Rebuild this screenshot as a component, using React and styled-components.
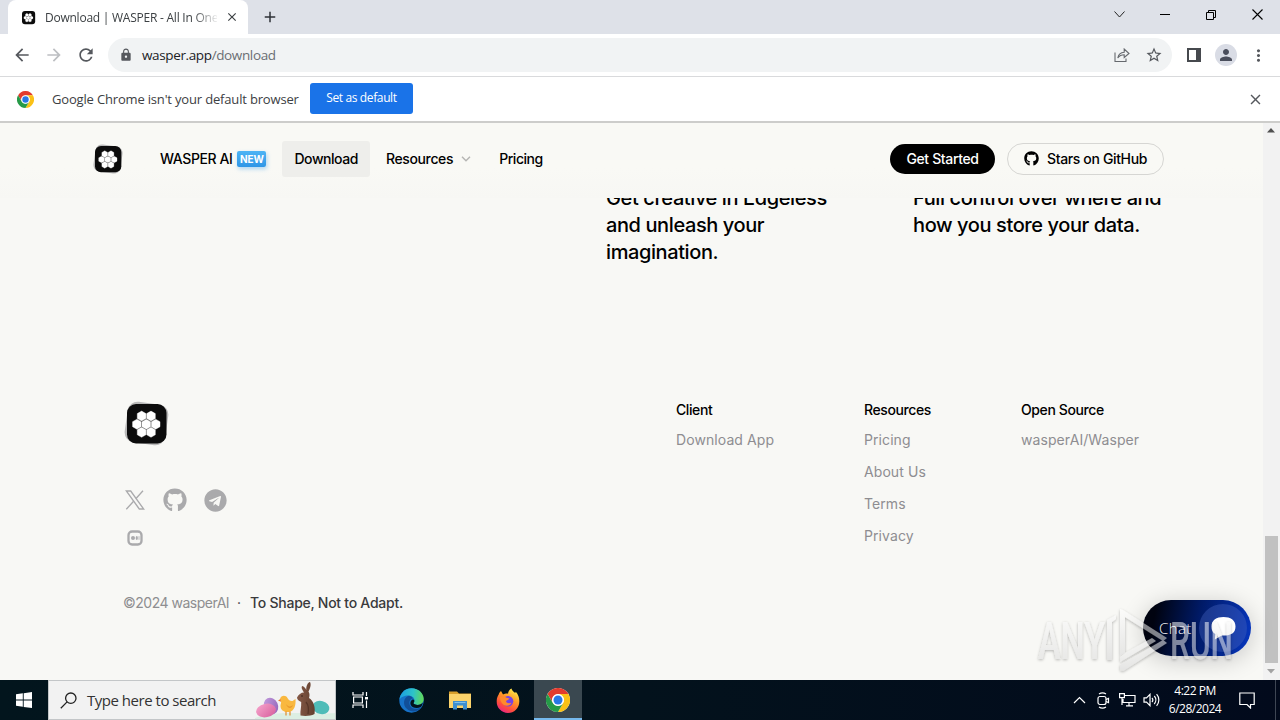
import React from "react";
import styled, { createGlobalStyle, css } from "styled-components";
import {
  MdArrowBack,
  MdArrowForward,
  MdRefresh,
  MdLock,
  MdStarBorder,
  MdPerson,
  MdMoreVert,
  MdClose,
  MdAdd,
} from "react-icons/md";
import { FaGithub, FaTelegram } from "react-icons/fa";

const GlobalStyle = createGlobalStyle`
  * {
    box-sizing: border-box;
  }

  body {
    margin: 0;
    overflow: hidden;
    font-family: "Open Sans", "Noto Sans", sans-serif;
  }

  svg {
    display: block;
    flex: none;
  }
`;

const Screen = styled.div`
  width: 1280px;
  height: 720px;
  display: flex;
  flex-direction: column;
  overflow: hidden;
  background: #f8f8f5;
`;

/* ---------- browser chrome ---------- */

const TabStrip = styled.div`
  height: 34px;
  flex: none;
  display: flex;
  background: #dee1e8;
  padding-left: 8px;
`;

const Tab = styled.div`
  width: 240px;
  height: 34px;
  display: flex;
  align-items: center;
  padding: 0 9px 0 13px;
  background: #fff;
  border-radius: 8px 8px 0 0;
  color: #3c4043;
`;

const TabTitle = styled.div`
  width: 174px;
  margin: 0 8px 0 9px;
  font-size: 12px;
  letter-spacing: -0.24px;
  white-space: nowrap;
  overflow: hidden;
  mask-image: linear-gradient(to right, #000 148px, transparent 174px);
`;

const NewTab = styled.div`
  width: 44px;
  display: flex;
  align-items: center;
  justify-content: center;
  color: #2f3237;
`;

const WindowButtons = styled.div`
  margin-left: auto;
  display: flex;
  align-items: center;
  height: 29px;
`;

const WindowButton = styled.div`
  width: 46px;
  display: flex;
  justify-content: center;
`;

const Toolbar = styled.div`
  height: 43px;
  flex: none;
  display: flex;
  align-items: center;
  background: #fff;
  border-bottom: 1px solid #d9dadc;
  padding: 0 6px;
  color: #55585d;
`;

const ToolButton = styled.div`
  width: 32px;
  height: 32px;
  display: flex;
  align-items: center;
  justify-content: center;
  color: ${(props) => (props.$off ? "#bdbfc2" : "#55585d")};
`;

const Omnibox = styled.div`
  width: 1064px;
  height: 34px;
  margin: 0 6px;
  display: flex;
  align-items: center;
  border-radius: 17px;
  background: #f1f3f4;
  padding: 0 2px 0 11px;
`;

const Url = styled.div`
  margin: 0 auto 0 9px;
  font-size: 13.5px;
  letter-spacing: -0.37px;
  color: #6a6e73;

  b {
    font-weight: 400;
    color: #202124;
  }
`;

const Avatar = styled.div`
  width: 22px;
  height: 22px;
  border-radius: 50%;
  display: flex;
  align-items: center;
  justify-content: center;
  background: #d9dce5;
  color: #4a4e5c;
`;

const InfoBar = styled.div`
  height: 46px;
  flex: none;
  display: flex;
  align-items: center;
  background: #fff;
  border-bottom: 2px solid #cdcdcb;
  padding: 0 16px 0 17px;
  color: #55585d;
`;

const InfoText = styled.div`
  width: 246px;
  margin: 0 12px 0 18px;
  font-size: 13px;
  letter-spacing: -0.17px;
  white-space: nowrap;
  color: #3c4043;
`;

const DefaultButton = styled.div`
  width: 103px;
  height: 31px;
  line-height: 30px;
  margin: 0 auto 2px 0;
  border-radius: 3px;
  background: #1a73e8;
  color: #fff;
  font-size: 12px;
  letter-spacing: -0.38px;
  text-align: center;
`;

/* ---------- web page ---------- */

const Viewport = styled.div`
  height: 557px;
  flex: none;
  display: flex;
  position: relative;
`;

const Page = styled.div`
  width: 1263px;
  display: flex;
  flex-direction: column;
  font-family: Inter, sans-serif;
  color: #000;
  background: #f8f8f5;
`;

const Nav = styled.div`
  height: 75px;
  flex: none;
  display: flex;
  align-items: center;
  padding: 0 99px 3px 93px;
  background: linear-gradient(#f9f9f5 60%, #f7f7f4);
`;

const NavItem = styled.div`
  height: 36px;
  display: flex;
  align-items: center;
  border-radius: 3px;
  padding: 0 12px 1px;
  font-size: 14px;
  font-weight: 450;
  letter-spacing: ${(props) => props.$spacing || "-0.45px"};
  white-space: nowrap;
  ${(props) =>
    props.$active &&
    css`
      background: #eeeeeb;
    `}

  > svg {
    margin-left: 8px;
  }
`;

const NavLinks = styled.div`
  display: flex;
  gap: 4px;
  margin-left: 25px;
`;

const NewBadge = styled.span`
  width: 29px;
  height: 16px;
  line-height: 16px;
  margin: 1px 0 0 5px;
  border-radius: 2px;
  background: linear-gradient(#4db4f5, #2f96e6);
  box-shadow: 1px 2px 4px rgba(60, 160, 235, 0.4);
  color: #fff;
  font-size: 10px;
  font-weight: 700;
  letter-spacing: 0;
  text-align: center;
`;

const Pill = styled.div`
  width: ${(props) => (props.$outline ? 157 : 105)}px;
  height: ${(props) => (props.$outline ? 32 : 30)}px;
  margin-left: ${(props) => (props.$outline ? "12px" : "auto")};
  padding-bottom: 1px;
  display: flex;
  align-items: center;
  justify-content: center;
  gap: 8px;
  border-radius: 16px;
  border: ${(props) => (props.$outline ? "1px solid #d6d6d3" : "none")};
  background: ${(props) => (props.$outline ? "transparent" : "#000")};
  color: ${(props) => (props.$outline ? "#000" : "#fff")};
  font-size: 14px;
  font-weight: 450;
  letter-spacing: -0.36px;
  white-space: nowrap;
`;

const Features = styled.div`
  height: 180px;
  flex: none;
  display: grid;
  grid-template-columns: 307px 307px;
  padding-left: 606px;
  overflow: hidden;
`;

const FeatureText = styled.p`
  margin: -13px 0 0;
  font-size: 20px;
  line-height: 27px;
  font-weight: 500;
  letter-spacing: -0.4px;
  white-space: pre-line;
`;

const Footer = styled.div`
  flex: 1;
  display: flex;
  padding: 23px 0 0 124px;
`;

const Brand = styled.div`
  width: 552px;
`;

const Socials = styled.div`
  width: 120px;
  margin-top: 35px;
  display: grid;
  grid-template-columns: repeat(3, 40px);
  grid-auto-rows: 38px;
  align-items: center;
  color: #aaaaac;
`;

const SocialLink = styled.div`
  width: 24px;
  height: 24px;
  margin-left: -1px;
  display: flex;
  align-items: center;
  justify-content: center;
`;

const Legal = styled.div`
  margin: 36px 0 0 -1px;
  display: flex;
  font-size: 14px;
  line-height: 20px;
  color: #3a3a3c;
  white-space: nowrap;
`;

const Owner = styled.span`
  width: 114px;
  letter-spacing: -0.5px;
  color: #8e8e90;
`;

const Motto = styled.span`
  font-weight: 450;
  margin-left: 9px;
  letter-spacing: -0.26px;
`;

const LinkColumn = styled.div`
  width: ${(props) => props.$width}px;
  display: flex;
  flex-direction: column;
  font-size: 14px;
`;

const ColumnTitle = styled.div`
  line-height: 20px;
  margin: -1px 0 4px;
  font-weight: 450;
  letter-spacing: -0.4px;
`;

const ColumnLink = styled.div`
  line-height: 32px;
  letter-spacing: 0.08px;
  color: #8e8d91;
`;

const ScrollBar = styled.div`
  width: 17px;
  display: flex;
  flex-direction: column;
  align-items: center;
  justify-content: space-between;
  padding: 5px 1px 6px 0;
  background: #f2f2f2;
`;

const ScrollThumb = styled.div`
  width: 13px;
  height: 127px;
  margin: auto 0 6px;
  background: #c1c1c1;
`;

const ChatButton = styled.div`
  position: absolute;
  left: 1143px;
  top: 477px;
  width: 108px;
  height: 56px;
  display: flex;
  align-items: center;
  justify-content: space-between;
  padding: 0 4px 0 16px;
  border-radius: 28px;
  background: linear-gradient(100deg, #000310 12%, #001a66 50%, #0634b8 95%);
  box-shadow: 0 4px 24px rgba(2, 6, 16, 0.2);
  color: #fff;
  font-size: 15px;
  font-weight: 300;
  letter-spacing: 0.4px;
`;

const ChatBubble = styled.div`
  width: 48px;
  height: 48px;
  border-radius: 50%;
  display: flex;
  align-items: center;
  justify-content: center;
  background: rgba(70, 100, 190, 0.4);
`;

const Watermark = styled.svg`
  position: absolute;
  left: 1030px;
  top: 480px;
`;

/* ---------- windows taskbar ---------- */

const TaskBar = styled.div`
  height: 40px;
  flex: none;
  display: flex;
  align-items: center;
  background: linear-gradient(90deg, #02151d, #03121c 50%, #020a1c);
  color: #fff;
`;

const TaskButton = styled.div`
  width: ${(props) => props.$width || 48}px;
  height: 40px;
  display: flex;
  align-items: center;
  justify-content: center;
  ${(props) =>
    props.$active &&
    css`
      background: #3a4850;
      border-bottom: 2px solid #76b9ed;
      padding-top: 1px;
    `}
`;

const SearchBox = styled.div`
  width: 288px;
  height: 40px;
  display: flex;
  align-items: center;
  padding-left: 11px;
  background: #f2f2f2;
  border: 1px solid #c3c6c8;
  color: #333;
  font-size: 15px;
  letter-spacing: -0.48px;

  span {
    width: 171px;
    margin-left: 10px;
    white-space: nowrap;
  }
`;

const Tray = styled.div`
  margin-left: auto;
  display: flex;
  align-items: center;
`;

const TrayIcon = styled.div`
  width: 24px;
  display: flex;
  justify-content: center;
`;

const Clock = styled.div`
  width: 64px;
  font-size: 12px;
  line-height: 18px;
  letter-spacing: -0.5px;
  text-align: center;
  white-space: nowrap;
`;

const Notifications = styled.div`
  width: 40px;
  height: 40px;
  display: flex;
  align-items: center;
  justify-content: center;
  margin-right: 8px;
`;

const ShowDesktop = styled.div`
  width: 5px;
  height: 40px;
  border-left: 1px solid #3e4654;
`;

/* ---------- drawings ---------- */

const HEX_CENTERS = [
  [17.6, 15.4],
  [27, 15.4],
  [12.9, 23.5],
  [22.3, 23.5],
  [31.7, 23.5],
  [17.6, 31.6],
  [27, 31.6],
];

const hexPoints = (cx, cy, r) =>
  [30, 90, 150, 210, 270, 330]
    .map((deg) => {
      const a = (deg * Math.PI) / 180;
      return `${(cx + r * Math.cos(a)).toFixed(2)},${(cy + r * Math.sin(a)).toFixed(2)}`;
    })
    .join(" ");

const WasperLogo = ({ size, plain }) => (
  <svg width={size} height={size} viewBox="0 0 45 45">
    {!plain && (
      <rect x="2" y="2" width="41" height="41" rx="10" fill="#b9b9b9" transform="rotate(8 22.5 22.5)" />
    )}
    <rect x="3" y="3" width="39.5" height="39.5" rx="9" fill="#0c0c0c" />
    {HEX_CENTERS.map(([x, y]) => (
      <polygon
        key={`${x}-${y}`}
        points={hexPoints(x, y - 0.3, 5)}
        fill="#fff"
        stroke="#fff"
        strokeWidth="0.4"
        strokeLinejoin="round"
      />
    ))}
  </svg>
);

const ChromeLogo = ({ size }) => (
  <svg width={size} height={size} viewBox="0 0 48 48">
    <circle cx="24" cy="24" r="24" fill="#fff" />
    <path d="M3.2 12A24 24 0 0 1 44.8 12H24A12 12 0 0 0 13.6 30Z" fill="#e33b2e" />
    <path d="M44.8 12A24 24 0 0 1 24 48L34.4 30A12 12 0 0 0 24 12Z" fill="#fbc116" />
    <path d="M24 48A24 24 0 0 1 3.2 12L13.6 30A12 12 0 0 0 34.4 30Z" fill="#269a48" />
    <circle cx="24" cy="24" r="11.5" fill="#fff" />
    <circle cx="24" cy="24" r="9" fill="#2878e6" />
  </svg>
);

const EdgeLogo = () => (
  <svg width="25" height="25" viewBox="0 0 24 24">
    <defs>
      <linearGradient id="edgeTop" x1="0" y1="0.4" x2="1" y2="0.5">
        <stop offset="0" stopColor="#1b9de2" />
        <stop offset="0.55" stopColor="#2dc3c9" />
        <stop offset="1" stopColor="#62d957" />
      </linearGradient>
    </defs>
    <circle cx="12" cy="12" r="11.7" fill="#1672c9" />
    <path d="M.4 11.5C1 4.800 6 .3 12 .3c7 0 11.700 5 11.700 10.200 0 3.300-2.500 5.700-6 5.700-2.800 0-4.300-1-3.500-2.200 2.200-3-1-6.700-5-6.700C5 7.300 1.500 9 .4 11.500Z" fill="url(#edgeTop)" />
    <path d="M9.500 7.400c-5 1-6.500 8.600-2 12.600 4 3.500 9.500 4 14-1.500-4 2.500-10.500 2-11.500-3.500-.5-3 1.500-5 3.500-5-1-1.800-2.500-2.600-4-2.600Z" fill="#114f99" />
    <path d="M14.200 14c-.8 1.200.7 2.200 3.500 2.200 2 0 4.200-.8 5.200-2.300-.5 2-1 3.500-2 4.400-3.500 1.600-8.400 1-9.700-2.300-.8-2.500.5-5 2.600-5 1.300.8 1.200 2 .4 3Z" fill="#03131c" />
  </svg>
);

const ExplorerLogo = () => (
  <svg width="22" height="20" viewBox="0 0 22 20">
    <path d="M0 1.500h8l2 2h12v5H0Z" fill="#d9a02c" />
    <rect y="4" width="22" height="14" fill="#fbd36b" />
    <path d="M4 11h14v8.500h-4v-4H8v4H4Z" fill="#3d8fd0" />
    <path d="M5.500 12.500h11" stroke="#7fc0ec" strokeWidth="1" />
  </svg>
);

const FirefoxLogo = () => (
  <svg width="24" height="25" viewBox="0 0 24 25">
    <defs>
      <linearGradient id="foxBody" x1="0.8" y1="0" x2="0.25" y2="1">
        <stop offset="0" stopColor="#fff34f" />
        <stop offset="0.4" stopColor="#ff9a26" />
        <stop offset="0.75" stopColor="#ff4b3e" />
        <stop offset="1" stopColor="#e6218c" />
      </linearGradient>
    </defs>
    <path d="M5 3l2 3.500c2-1 4-1 5-.8C12.500 3 13.500 1.500 15.500.5c.3 2 2 3.200 3.700 4.500l.6-1.200c2.500 3 3.700 6 3.500 10A11.300 11.300 0 0 1 .7 13.500C.6 9.500 2 8 2.700 6.500 3 5 4 4 5 3Z" fill="url(#foxBody)" />
    <circle cx="12" cy="13.300" r="5.300" fill="#7542e5" />
    <path d="M4 9c3-1.500 5-.5 6.500.8l3 .6c-.5 1.300-3 1.500-3.500 2.800.3 2 3 2.500 5.500 1.500-1.500 3.300-5.500 4-8 2C5 14.800 4 12 4 9Z" fill="#ff8a2b" />
  </svg>
);

const EasterEggs = () => (
  <svg width="80" height="38" viewBox="0 0 80 38">
    <defs>
      <linearGradient id="eggPink" x1="0" y1="0" x2="1" y2="1">
        <stop offset="0" stopColor="#f7a6cd" />
        <stop offset="1" stopColor="#d65d9c" />
      </linearGradient>
      <linearGradient id="eggViolet" x1="0" y1="0" x2="1" y2="1">
        <stop offset="0" stopColor="#c8a0e0" />
        <stop offset="1" stopColor="#8f62b8" />
      </linearGradient>
      <linearGradient id="bunny" x1="0" y1="0" x2="1" y2="0">
        <stop offset="0" stopColor="#845846" />
        <stop offset="1" stopColor="#63402f" />
      </linearGradient>
    </defs>
    <path d="M-2 38c8-4 20-6 40-6s34 1 42 0v6Z" fill="#dceee3" />
    <ellipse cx="66" cy="26.500" rx="8.500" ry="6.500" fill="#4fbcb8" transform="rotate(14 66 26.500)" />
    <ellipse cx="16" cy="25" rx="7" ry="8.500" fill="url(#eggViolet)" transform="rotate(-25 16 25)" />
    <ellipse cx="11" cy="29.500" rx="10" ry="6.700" fill="url(#eggPink)" transform="rotate(-12 11 29.500)" />
    <path d="M25 18c1-4 6-4 7.500-1 1 2 3 3.500 5 3 1-.5 2-1.500 3-2 .5 6-1 12-6.500 13-5 .5-8.500-2-8.500-6 0-2 1-3 .5-4.500Z" fill="#f9b83f" />
    <path d="M31 23c2 3 5 3 7 1-.5 3-5 5-7-1Z" fill="#e99a2c" />
    <path d="M25.500 18l-2.500 1.500 3 1.200Z" fill="#e87824" />
    <path d="M31 30.500v4M35 30.500v4" stroke="#e08a2b" strokeWidth="1.200" />
    <path d="M49 11.500C46.500 8 46 5.500 47.500 5c2 .5 3 2.500 3.800 4C51 5.500 52.500 1.500 55 1c1.500 2.500 0 7-1.500 9.500 1.500 2.500 1 4.500.5 6.500C59 20 60.500 27 59.500 33c-4 2.200-10 2.300-14 1.500-.5-5 1-8 .7-13.500C43.500 19.500 42 18.500 42 16.500c1.500-3 4-5 7-5Z" fill="url(#bunny)" />
    <path d="M51 21c2.500 3 3 7 2 12" stroke="#563527" strokeWidth="1.200" fill="none" />
    <circle cx="47" cy="15" r="0.700" fill="#22120d" />
  </svg>
);

const XLogo = () => (
  <svg width="20" height="20" viewBox="0 0 20 20" fill="none" stroke="currentColor" strokeWidth="1.300">
    <path d="M1.300 1h4.400l13 18h-4.400Z" />
    <path d="M18 .8 11 8.500M8.600 11.300 1.300 19.300" />
  </svg>
);

const MediumLogo = () => (
  <svg width="16" height="16" viewBox="0 0 16 16">
    <rect x="1.500" y="1.500" width="13" height="13" rx="3.600" fill="none" stroke="currentColor" strokeWidth="2.300" />
    <circle cx="6" cy="8" r="2" fill="currentColor" />
    <ellipse cx="9.800" cy="8" rx="1.100" ry="2" fill="currentColor" />
    <path d="M12 6.200v3.600" stroke="currentColor" strokeWidth="0.800" />
  </svg>
);

const AnyRunMark = () => (
  <Watermark width="220" height="76" viewBox="0 0 220 76">
    <defs>
      <filter id="markShadow" x="-10%" y="-10%" width="120%" height="130%">
        <feDropShadow dx="0" dy="1" stdDeviation="1.800" floodColor="#000" floodOpacity="0.5" />
      </filter>
      <linearGradient id="markFill" x1="0" y1="0" x2="0" y2="1">
        <stop offset="0" stopColor="#fff" />
        <stop offset="1" stopColor="#d4d4d4" />
      </linearGradient>
    </defs>
    <g
      filter="url(#markShadow)"
      opacity="0.55"
      fontFamily="Roboto, sans-serif"
      fontSize="52"
      fontWeight="500"
      fill="url(#markFill)"
    >
      <text x="8" y="56" textLength="67" lengthAdjust="spacingAndGlyphs">ANY</text>
      <text x="140" y="56" textLength="63" lengthAdjust="spacingAndGlyphs">RUN</text>
      <path d="M77 17l9-5v4l-4 3v38h-5ZM90 6l3 1 44 28-4 3L95 14v36l-5 3Z" />
      <path d="M95 50l27-15 4 3-36 21v-5ZM90 62l43-25 4 3-44 28-3-1Z" />
    </g>
  </Watermark>
);

const columns = [
  { title: "Client", width: 188, links: ["Download App"] },
  { title: "Resources", width: 157, links: ["Pricing", "About Us", "Terms", "Privacy"] },
  { title: "Open Source", width: 200, links: ["wasperAI/Wasper"] },
];

const Browser = () => (
  <>
    <TabStrip>
      <Tab>
        <WasperLogo size={15} plain />
        <TabTitle>Download | WASPER - All In One</TabTitle>
        <MdClose size={14} />
      </Tab>
      <NewTab>
        <MdAdd size={18} />
      </NewTab>
      <WindowButtons>
        <WindowButton>
          <svg width="11" height="7" fill="none" stroke="#222">
            <path d="M.5.500l5 5.500 5-5.500" />
          </svg>
        </WindowButton>
        <WindowButton>
          <svg width="10" height="2" stroke="#000">
            <path d="M0 .500h10" />
          </svg>
        </WindowButton>
        <WindowButton>
          <svg width="10" height="10" fill="none" stroke="#000">
            <path d="M.5 2.500h7v7h-7ZM2.500 2.500V.500h7v7h-2" />
          </svg>
        </WindowButton>
        <WindowButton>
          <svg width="11" height="11" fill="none" stroke="#000" strokeWidth="1.100">
            <path d="M.500.500l10 10M10.500.500l-10 10" />
          </svg>
        </WindowButton>
      </WindowButtons>
    </TabStrip>

    <Toolbar>
      <ToolButton>
        <MdArrowBack size={20} />
      </ToolButton>
      <ToolButton $off>
        <MdArrowForward size={20} />
      </ToolButton>
      <ToolButton>
        <MdRefresh size={20} />
      </ToolButton>
      <Omnibox>
        <MdLock size={14} />
        <Url>
          <b>wasper.app</b>/download
        </Url>
        <ToolButton>
          <svg width="16" height="14" fill="none" stroke="#66696e" strokeWidth="1.100">
            <path d="M1 4.500v9h11v-3" />
            <path d="M3.800 10C4.500 6 7 4.300 10.200 4.200V1L15 5.500 10.200 9.500V6.800C7.500 6.800 5.500 7.600 3.800 10Z" />
          </svg>
        </ToolButton>
        <ToolButton>
          <MdStarBorder size={18} />
        </ToolButton>
      </Omnibox>
      <ToolButton>
        <svg width="14" height="14" fill="none">
          <rect x="1" y="1" width="12" height="12" stroke="#46494e" strokeWidth="2" />
          <rect x="9" y="1" width="4" height="12" fill="#46494e" />
        </svg>
      </ToolButton>
      <ToolButton>
        <Avatar>
          <MdPerson size={18} />
        </Avatar>
      </ToolButton>
      <ToolButton>
        <MdMoreVert size={19} />
      </ToolButton>
    </Toolbar>

    <InfoBar>
      <ChromeLogo size={17} />
      <InfoText>Google Chrome isn't your default browser</InfoText>
      <DefaultButton>Set as default</DefaultButton>
      <MdClose size={17} />
    </InfoBar>
  </>
);

const SiteNav = () => (
  <Nav>
    <WasperLogo size={30} />
    <NavLinks>
      <NavItem $spacing="-0.4px">
        WASPER AI
        <NewBadge>NEW</NewBadge>
      </NavItem>
      <NavItem $active>Download</NavItem>
      <NavItem $spacing="-0.37px">
        Resources
        <svg width="10" height="6" fill="none" stroke="#b5b5b3" strokeWidth="1.400">
          <path d="M1 .800l4 4 4-4" />
        </svg>
      </NavItem>
      <NavItem>Pricing</NavItem>
    </NavLinks>
    <Pill>Get Started</Pill>
    <Pill $outline>
      <FaGithub size={15} />
      Stars on GitHub
    </Pill>
  </Nav>
);

const SiteFooter = () => (
  <Footer>
    <Brand>
      <WasperLogo size={45} />
      <Socials>
        <SocialLink>
          <XLogo />
        </SocialLink>
        <SocialLink>
          <FaGithub size={24} />
        </SocialLink>
        <SocialLink>
          <FaTelegram size={23} />
        </SocialLink>
        <SocialLink>
          <MediumLogo />
        </SocialLink>
      </Socials>
      <Legal>
        <Owner>©2024 wasperAI</Owner>·<Motto>To Shape, Not to Adapt.</Motto>
      </Legal>
    </Brand>
    {columns.map((column) => (
      <LinkColumn key={column.title} $width={column.width}>
        <ColumnTitle>{column.title}</ColumnTitle>
        {column.links.map((link) => (
          <ColumnLink key={link}>{link}</ColumnLink>
        ))}
      </LinkColumn>
    ))}
  </Footer>
);

const WindowsBar = () => (
  <TaskBar>
    <TaskButton>
      <svg width="16" height="16" fill="#fff">
        <path d="M0 2.300 6.800 1.300V7.600H0ZM7.700 1.200 16 0V7.600H7.700ZM0 8.500h6.800v6.300L0 13.800ZM7.700 8.500H16V16l-8.300-1.100Z" />
      </svg>
    </TaskButton>
    <SearchBox>
      <svg width="17" height="17" fill="none" stroke="#222" strokeWidth="1.300">
        <circle cx="10.800" cy="6.200" r="5.200" />
        <path d="M7.100 9.900.8 16.200" />
      </svg>
      <span>Type here to search</span>
      <EasterEggs />
    </SearchBox>
    <TaskButton>
      <svg width="17" height="16" fill="none" stroke="#fff" strokeWidth="1.200">
        <path d="M1 0v3h10V0M1 16v-3h10v3M1.600 5h8.800v6H1.600ZM14.500 0v4M14.500 8.500V16" />
        <path d="M13 6.200h3" strokeWidth="2.500" />
      </svg>
    </TaskButton>
    <TaskButton $width={54}>
      <EdgeLogo />
    </TaskButton>
    <TaskButton $width={44}>
      <ExplorerLogo />
    </TaskButton>
    <TaskButton $width={52}>
      <FirefoxLogo />
    </TaskButton>
    <TaskButton $active>
      <ChromeLogo size={24} />
    </TaskButton>
    <Tray>
      <TrayIcon>
        <svg width="13" height="8" fill="none" stroke="#fff" strokeWidth="1.200">
          <path d="M1 7l5.500-5.500L12 7" />
        </svg>
      </TrayIcon>
      <TrayIcon>
        <svg width="13" height="17" fill="none" stroke="#fff" strokeWidth="1.200">
          <rect x="1" y="4.500" width="8" height="8" rx="2" />
          <path d="M9 7.500l2.500-1v4L9 9.500M2 2c2-1.300 5-1.300 7 0M2 15c2 1.300 5 1.300 7 0" />
        </svg>
      </TrayIcon>
      <TrayIcon>
        <svg width="17" height="14" fill="none" stroke="#fff" strokeWidth="1.200">
          <path d="M6 2.500h10v7H4V6M.6.600h4.800v4H.600ZM3 4.600V12M7 12.800h7M10 9.500v3" />
        </svg>
      </TrayIcon>
      <TrayIcon>
        <svg width="17" height="14" fill="none" stroke="#fff" strokeWidth="1.200">
          <path d="M1 4.800h2.500l3.500-3.500v11.400L3.500 9.200H1ZM9 5c1 1.200 1 2.800 0 4M11.300 3c2 2.300 2 5.700 0 8M13.600 1.200c3 3.400 3 8.200 0 11.600" />
        </svg>
      </TrayIcon>
      <Clock>
        4:22 PM
        <br />
        6/28/2024
      </Clock>
      <Notifications>
        <svg width="16" height="17" fill="none" stroke="#fff" strokeWidth="1.200">
          <path d="M.800 1h14.400v11.500h-3.700V16L8 12.500H.800Z" />
        </svg>
      </Notifications>
      <ShowDesktop />
    </Tray>
  </TaskBar>
);

const App = () => {
  return (
    <Screen>
      <GlobalStyle />
      <Browser />
      <Viewport>
        <Page>
          <SiteNav />
          <Features>
            <FeatureText>{"Get creative in Edgeless\nand unleash your\nimagination."}</FeatureText>
            <FeatureText>{"Full control over where and\nhow you store your data."}</FeatureText>
          </Features>
          <SiteFooter />
        </Page>
        <ScrollBar>
          <svg width="8" height="5" fill="#505050">
            <path d="M4 0l4 4.500H0Z" />
          </svg>
          <ScrollThumb />
          <svg width="8" height="5" fill="#a3a3a3">
            <path d="M0 0h8L4 4.500Z" />
          </svg>
        </ScrollBar>
        <ChatButton>
          Chat
          <ChatBubble>
            <svg width="25" height="23" viewBox="0 0 25 23" fill="#fff">
              <path d="M12.500 0C19.500 0 24.500 3 24.500 9.500S20 18.500 13 18.500c-2 0-3 .3-4.500 1.300L3.800 22.500 4.300 17C1.500 15.500.5 13 .5 9.500.5 3 5.500 0 12.500 0Z" />
            </svg>
          </ChatBubble>
        </ChatButton>
        <AnyRunMark />
      </Viewport>
      <WindowsBar />
    </Screen>
  );
};

export default App;
